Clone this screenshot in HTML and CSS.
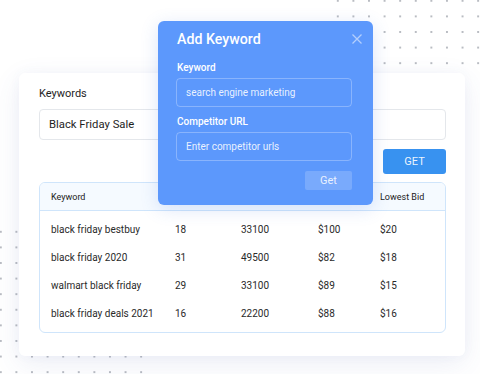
FILE: index.html
```html
<!DOCTYPE html>
<html lang="en">
<head>
<meta charset="utf-8">
<title>Add Keyword</title>
<link rel="stylesheet" href="styles.css">
</head>
<body>
<div class="scene">
  <div class="dots dots-tr"></div>
  <div class="dots dots-bl"></div>

  <section class="card">
    <div class="field-label">Keywords</div>
    <div class="text-input">Black Friday Sale</div>
    <div class="actions"><button class="btn-get">GET</button></div>

    <div class="table">
      <div class="row head">
        <span>Keyword</span><span>Difficulty</span><span>Volume</span><span>Highest Bid</span><span>Lowest Bid</span>
      </div>
      <div class="tbody">
        <div class="row"><span>black friday bestbuy</span><span>18</span><span>33100</span><span>$100</span><span>$20</span></div>
        <div class="row"><span>black friday 2020</span><span>31</span><span>49500</span><span>$82</span><span>$18</span></div>
        <div class="row"><span>walmart black friday</span><span>29</span><span>33100</span><span>$89</span><span>$15</span></div>
        <div class="row"><span>black friday deals 2021</span><span>16</span><span>22200</span><span>$88</span><span>$16</span></div>
      </div>
    </div>
  </section>

  <div class="modal">
    <div class="modal-head">
      <h2 class="modal-title">Add Keyword</h2>
      <svg class="close" width="12" height="12" viewBox="0 0 12 12"><path d="M1.5 1.5 L10.5 10.5 M10.5 1.5 L1.5 10.5" stroke="#b3cffd" stroke-width="1.3" fill="none"/></svg>
    </div>
    <div class="m-label first">Keyword</div>
    <div class="m-input">search engine marketing</div>
    <div class="m-label">Competitor URL</div>
    <div class="m-input">Enter competitor urls</div>
    <div class="m-actions"><button class="m-btn">Get</button></div>
  </div>
</div>
</body>
</html>
```

FILE: styles.css
```css
* { box-sizing: border-box; }
html, body { margin: 0; padding: 0; background: #ffffff; }
body { font-family: Roboto, "Liberation Sans", sans-serif; color: #222; }

.scene {
  position: relative;
  width: 480px;
  height: 374px;
  overflow: hidden;
  padding: 73px 0 0 19px;
}

.dots {
  position: absolute;
  background-image: radial-gradient(circle, #b9bcc2 0.9px, rgba(255,255,255,0) 1.3px);
  background-size: 15.6px 15.6px;
}
.dots-tr { left: 330px; top: -7px; width: 156px; height: 79px; }
.dots-bl { left: -7px; top: 224px; width: 157px; height: 160px; }

.card {
  position: relative;
  z-index: 1;
  width: 446px;
  background: #fff;
  border-radius: 6px;
  box-shadow: 0 8px 28px rgba(70, 90, 170, 0.10), 0 0 12px rgba(70, 90, 170, 0.04);
  padding: 13px 19px 23px 20px;
}

.field-label { font-size: 11px; line-height: 16px; color: #1e1e1e; margin-bottom: 7px; }

.text-input {
  height: 31px;
  border: 1px solid #e4e7eb;
  border-radius: 4px;
  padding: 0 9px;
  font-size: 11.3px;
  line-height: 29px;
  color: #1e1e1e;
}

.actions { display: flex; justify-content: flex-end; margin-top: 9px; }
.btn-get {
  width: 63px; height: 25px;
  border: 0; border-radius: 3px;
  background: #3892f0;
  color: rgba(255,255,255,0.92);
  font-family: inherit; font-size: 11px;
  padding: 0;
}

.table {
  margin-top: 8px;
  border: 1px solid #cfe5fb;
  border-radius: 6px;
  overflow: hidden;
}
.row {
  display: grid;
  grid-template-columns: 124px 66px 77px 62px 1fr;
  align-items: center;
  height: 28px;
  padding-left: 11px;
  font-size: 10px;
  color: #2a2a2a;
}
.row.head {
  background: #f5faff;
  border-bottom: 1px solid #cfe5fb;
  font-size: 9px;
  color: #222;
}
.tbody { padding: 4px 0 5px; }

.modal {
  position: absolute;
  z-index: 2;
  left: 158px; top: 21px;
  width: 215px; height: 184px;
  background: #5c98fc;
  border-radius: 6px;
  box-shadow: 0 4px 18px rgba(60, 110, 220, 0.18);
  padding: 8px 21px 15px 18px;
  color: #fff;
}
.modal-head { display: flex; justify-content: space-between; align-items: center; height: 20px; }
.modal-title { margin: 0 0 0 1px; font-size: 14.2px; font-weight: 500; line-height: 20px; color: #fff; }
.close { margin-right: -11px; }

.m-label { font-size: 10px; font-weight: 500; line-height: 14px; margin: 8px 0 3px 1px; color: #fff; }
.m-label.first { margin-top: 12px; }
.m-input {
  height: 29px;
  border: 1px solid rgba(255,255,255,0.28);
  border-radius: 4px;
  padding: 0 9px;
  font-size: 10px;
  line-height: 27px;
  color: rgba(255,255,255,0.88);
}
.m-actions { display: flex; justify-content: flex-end; margin-top: 10px; }
.m-btn {
  width: 47px; height: 19px;
  border: 0; border-radius: 2px;
  background: rgba(255,255,255,0.18);
  color: rgba(255,255,255,0.85);
  font-family: inherit; font-size: 11px;
  padding: 0;
}
```
